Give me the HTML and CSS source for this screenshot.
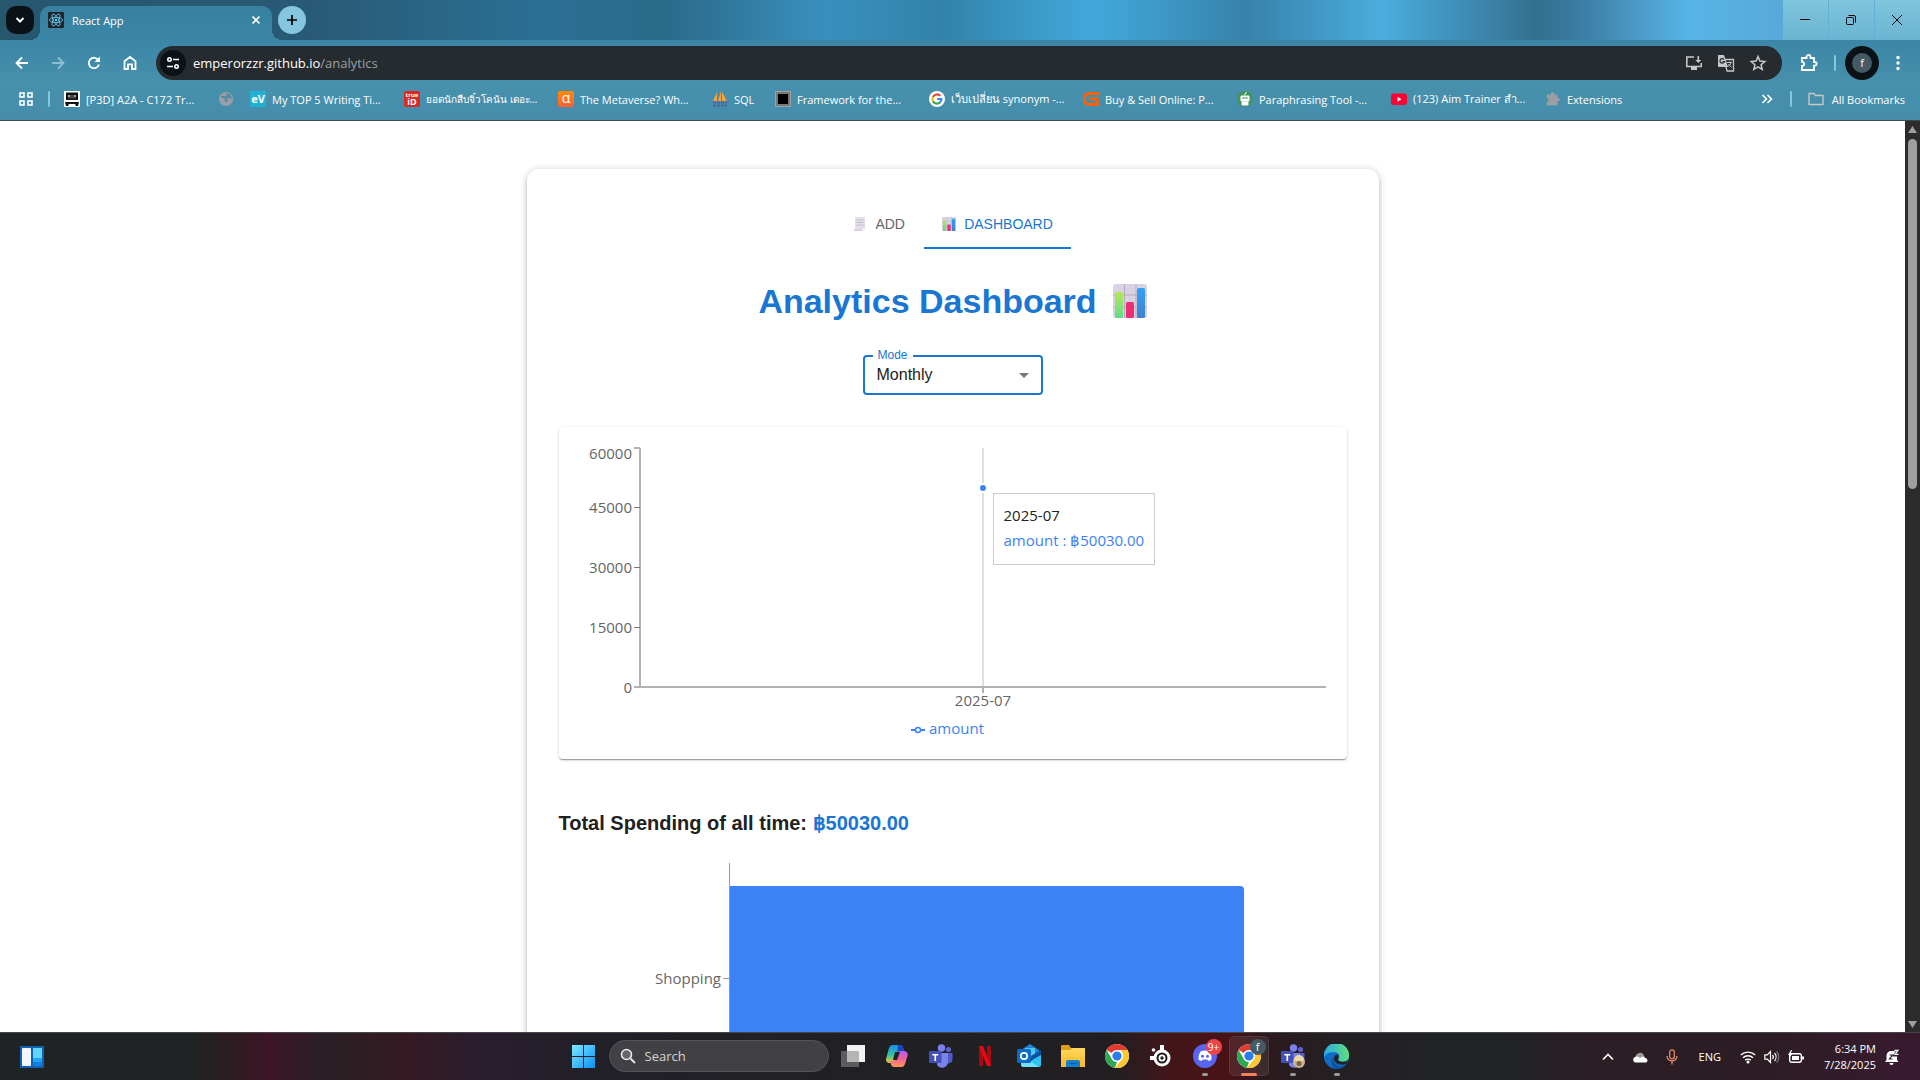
FILE: index.html
```html
<!DOCTYPE html>
<html lang="en">
<head>
<meta charset="utf-8">
<title>React App</title>
<link rel="stylesheet" href="styles.css">
</head>
<body>
<svg width="0" height="0" class="defs" aria-hidden="true">
  <defs>
    <linearGradient id="gGreen" x1="0" y1="0" x2="0" y2="1"><stop offset="0" stop-color="#b5e853"/><stop offset="1" stop-color="#5fdc8c"/></linearGradient>
    <linearGradient id="gBlue" x1="0" y1="0" x2="0" y2="1"><stop offset="0" stop-color="#32a2f3"/><stop offset="1" stop-color="#3f7fd0"/></linearGradient>
    <linearGradient id="gWin" x1="0" y1="0" x2="1" y2="1"><stop offset="0" stop-color="#7deaff"/><stop offset="1" stop-color="#0a90f5"/></linearGradient>
    <linearGradient id="gCopA" x1="0" y1="0" x2="0" y2="1"><stop offset="0" stop-color="#1c8cf0"/><stop offset=".55" stop-color="#33c4a0"/><stop offset="1" stop-color="#f5c52c"/></linearGradient>
    <linearGradient id="gCopB" x1="0" y1="0" x2="0" y2="1"><stop offset="0" stop-color="#b05cf0"/><stop offset=".5" stop-color="#f0609a"/><stop offset="1" stop-color="#ff9a50"/></linearGradient>
    <linearGradient id="gFolder" x1="0" y1="0" x2="0" y2="1"><stop offset="0" stop-color="#ffd75e"/><stop offset="1" stop-color="#f9b926"/></linearGradient>
    <linearGradient id="gEdge" x1="0" y1="0" x2="1" y2="0"><stop offset="0" stop-color="#2aa8e8"/><stop offset="1" stop-color="#5fe07a"/></linearGradient>
    <linearGradient id="gAlpha" x1="0" y1="0" x2="0" y2="1"><stop offset="0" stop-color="#ff8c00"/><stop offset="1" stop-color="#ff5c38"/></linearGradient>
    <symbol id="chart" viewBox="0 0 34 34">
      <rect width="34" height="34" rx="3" fill="#d9d2e2"/>
      <path d="M11.500 0V34M23 0V34M0 11H34M0 23H34" stroke="#b4abc2" stroke-width="1"/>
      <rect x="2" y="8" width="8" height="26" rx="1.500" fill="url(#gGreen)"/>
      <rect x="13" y="18" width="8" height="16" rx="1.500" fill="#ea2f73"/>
      <rect x="24" y="4" width="8" height="30" rx="1.500" fill="url(#gBlue)"/>
    </symbol>
    <symbol id="chrome" viewBox="0 0 24 24">
      <circle cx="12" cy="12" r="12" fill="#fff"/>
      <path d="M12 0A12 12 0 0 1 22.400 6H12A6 6 0 0 0 6.800 9L1.600 6A12 12 0 0 1 12 0Z" fill="#e33b2e"/>
      <path d="M1.600 6 6.800 15A6 6 0 0 0 12 18L9.800 23.800A12 12 0 0 1 1.600 6Z" fill="#2da94f"/>
      <path d="M22.400 6A12 12 0 0 1 9.800 23.800L17.200 15A6 6 0 0 0 17.200 9L16 6Z" fill="#fcc934"/>
      <circle cx="12" cy="12" r="5.800" fill="#fff"/><circle cx="12" cy="12" r="4.600" fill="#2b7de9"/>
    </symbol>
    <symbol id="teams" viewBox="0 0 24 24">
      <circle cx="19.500" cy="5.500" r="2.600" fill="#5b62c9"/><circle cx="12.500" cy="4" r="3.700" fill="#7b83eb"/>
      <path d="M16 9h7.500v6.500a4 4 0 0 1-6.500 3Z" fill="#5059c9"/>
      <path d="M8 9h11v8.500a6 6 0 0 1-11 3.500Z" fill="#7b83eb"/>
      <rect x="0" y="7" width="12.500" height="12" rx="1.200" fill="#454fb8"/>
      <path d="M3.300 10h6v1.500H7.100V17H5.500v-5.500H3.300Z" fill="#fff"/>
    </symbol>
    <symbol id="puzzle" viewBox="0 0 18 18">
      <path d="M2 4h4.500V3a2 2 0 0 1 4 0v1H14v4h.8a1.800 1.800 0 0 1 0 3.600H14V16H2v-4a2.100 2.100 0 0 0 0-4.200Z"/>
    </symbol>
  </defs>
</svg>

<header class="browser">
  <div class="tabstrip">
    <button class="tab-search" aria-label="Search tabs"><svg width="10" height="8" viewBox="0 0 10 8"><path d="M1.500 2 5 5.500 8.500 2" fill="none" stroke="#fff" stroke-width="2"/></svg></button>
    <div class="tab">
      <svg width="16" height="16" viewBox="0 0 16 16"><rect width="16" height="16" rx="1" fill="#20232a"/><g fill="none" stroke="#61dafb" stroke-width=".8"><ellipse cx="8" cy="8" rx="6.600" ry="2.600"/><ellipse cx="8" cy="8" rx="6.600" ry="2.600" transform="rotate(60 8 8)"/><ellipse cx="8" cy="8" rx="6.600" ry="2.600" transform="rotate(120 8 8)"/></g><circle cx="8" cy="8" r="1.200" fill="#61dafb"/></svg>
      <span class="tab-title">React App</span>
      <button class="plain" aria-label="Close tab"><svg width="16" height="16" viewBox="0 0 16 16"><path d="M4.500 4.500l7 7M11.500 4.500l-7 7" stroke="#fff" stroke-width="1.600"/></svg></button>
    </div>
    <button class="new-tab" aria-label="New tab"><svg width="12" height="12" viewBox="0 0 12 12"><path d="M6 1v10M1 6h10" stroke="#000" stroke-width="1.700"/></svg></button>
    <div class="window-controls">
      <button aria-label="Minimize"><svg width="12" height="12" viewBox="0 0 12 12"><path d="M1 5.500h10" stroke="#000"/></svg></button>
      <button aria-label="Restore"><svg width="12" height="12" viewBox="0 0 12 12"><rect x="1.500" y="3.500" width="7" height="7" rx="1" fill="none" stroke="#000"/><path d="M3.500 1.500H9a1.500 1.500 0 0 1 1.500 1.500v5.500" fill="none" stroke="#000"/></svg></button>
      <button aria-label="Close"><svg width="12" height="12" viewBox="0 0 12 12"><path d="M1 1l10 10M11 1 1 11" stroke="#000"/></svg></button>
    </div>
  </div>

  <div class="toolbar">
    <button class="nav" aria-label="Back"><svg width="16" height="16" viewBox="0 0 16 16"><path d="M14 8H3M8 2.500 2.500 8 8 13.500" fill="none" stroke="#fff" stroke-width="1.800"/></svg></button>
    <button class="nav" aria-label="Forward"><svg width="16" height="16" viewBox="0 0 16 16"><path d="M2 8h11M8 2.500 13.500 8 8 13.500" fill="none" stroke="#8dbfd3" stroke-width="1.800"/></svg></button>
    <button class="nav" aria-label="Reload"><svg width="16" height="16" viewBox="0 0 16 16"><path d="M13 9.500A5.200 5.200 0 1 1 12.300 5" fill="none" stroke="#fff" stroke-width="1.800"/><path d="M14 1.500V7H8.500Z" fill="#fff"/></svg></button>
    <button class="nav" aria-label="Home"><svg width="16" height="16" viewBox="0 0 16 16"><path d="M2.500 14V6.300L8 2l5.500 4.300V14H10V9.300H6V14Z" fill="none" stroke="#fff" stroke-width="1.800"/></svg></button>
    <div class="omnibox">
      <button class="site-info" aria-label="View site information"><svg width="14" height="14" viewBox="0 0 14 14"><g fill="none" stroke="#fff" stroke-width="1.600"><circle cx="3.500" cy="3.500" r="1.700"/><path d="M7 3.500h6M1 10.500h6"/><circle cx="10.500" cy="10.500" r="1.700"/></g></svg></button>
      <span class="url">emperorzzr.github.io<span class="path">/analytics</span></span>
      <button class="plain" aria-label="Install app"><svg width="18" height="18" viewBox="0 0 18 18"><path d="M9 3H1.800v9.500h14.400V9" fill="none" stroke="#c7c7c7" stroke-width="1.600"/><path d="M6 13h6v3H6ZM12.500 2h1.600v4h2.200l-3 3-3-3h2.200Z" fill="#c7c7c7"/></svg></button>
      <button class="plain" aria-label="Translate this page"><svg width="18" height="18" viewBox="0 0 18 18"><path d="M1 1h6l4 12H2a1 1 0 0 1-1-1Z" fill="#c7c7c7"/><path d="M8 5.500h8.500V17H10L9 13" fill="none" stroke="#c7c7c7" stroke-width="1.300"/><path d="M7 5.300a2.300 2.300 0 1 0 .5 2.200H5.500" fill="none" stroke="#252b2e" stroke-width="1.200"/><path d="M10 8.500h5M12.500 7.500v1M14 8.500c-.5 2-2 3.500-3 4M11.500 10l3 3.500" fill="none" stroke="#c7c7c7"/></svg></button>
      <button class="plain" aria-label="Bookmark this tab"><svg width="18" height="18" viewBox="0 0 18 18"><path d="M9 2.500l1.900 4.600 4.900.4-3.700 3.200 1.100 4.800L9 12.900l-4.200 2.600 1.100-4.800-3.700-3.200 4.900-.4Z" fill="none" stroke="#c7c7c7" stroke-width="1.500"/></svg></button>
    </div>
    <button class="plain extensions" aria-label="Extensions"><svg width="18" height="18" fill="none" stroke="#fff" stroke-width="1.800"><use href="#puzzle"/></svg></button>
    <span class="divider"></span>
    <button class="profile" aria-label="Profile"><span>f</span></button>
    <button class="plain" aria-label="Menu"><svg width="16" height="16" viewBox="0 0 16 16" fill="#fff"><circle cx="8" cy="2.500" r="1.700"/><circle cx="8" cy="8" r="1.700"/><circle cx="8" cy="13.500" r="1.700"/></svg></button>
  </div>

  <nav class="bookmarks">
    <button class="plain" aria-label="Apps"><svg width="14" height="14" viewBox="0 0 14 14" fill="none" stroke="#fff" stroke-width="1.600"><rect x="1" y="1" width="4" height="4"/><rect x="9" y="1" width="4" height="4"/><rect x="1" y="9" width="4" height="4"/><rect x="9" y="9" width="4" height="4"/></svg></button>
    <span class="divider"></span>
    <a class="bookmark" href="#"><svg width="16" height="16" viewBox="0 0 16 16"><rect width="16" height="16" fill="#fff"/><path d="M2 1.500h12V9H2ZM1 11h14l-1 4h-2l-1-2H5l-1 2H2Z" fill="#111"/><path d="M4 4h8v3.500H4Z" fill="#444"/><path d="M4 5h2M10 5h2" stroke="#fff"/></svg>[P3D] A2A - C172 Tr...</a>
    <a class="bookmark icon-only" href="#" aria-label="Saved page"><svg width="16" height="16" viewBox="0 0 16 16"><circle cx="8" cy="8" r="7" fill="#9b9fa5"/><path d="M3 5c2-1 3 1 5 0s-1-3 1-3c3 1 5 3 5 6-2 0-2-2-4-1s1 3-1 4-3-2-2-3-4 0-4-3Z" fill="#4f8da6"/></svg></a>
    <a class="bookmark" href="#"><svg width="16" height="16" viewBox="0 0 16 16"><rect width="16" height="16" fill="#1fb1d3"/><text x="8" y="12" text-anchor="middle" class="fav fav-ev">eV</text></svg>My TOP 5 Writing Ti...</a>
    <a class="bookmark thai" href="#"><svg width="16" height="16" viewBox="0 0 16 16"><rect width="16" height="16" rx="2" fill="#d92a26"/><text x="8" y="6" text-anchor="middle" class="fav fav-true">true</text><text x="8" y="14" text-anchor="middle" class="fav fav-id">iD</text></svg>ยอดนักสืบจิ๋วโคนัน เดอะ...</a>
    <a class="bookmark" href="#"><svg width="16" height="16" viewBox="0 0 16 16"><rect width="16" height="16" rx="2" fill="url(#gAlpha)"/><text x="8" y="12" text-anchor="middle" class="fav fav-alpha">α</text></svg>The Metaverse? Wh...</a>
    <a class="bookmark short" href="#"><svg width="16" height="16" viewBox="0 0 16 16"><path d="M5 1v9H1ZM9 0v10H6ZM10 1l5 9h-5Z" fill="#f5a33a"/><path d="M1 11.500h14M1 14.500h14" stroke="#5a5f9e" stroke-width="2" stroke-dasharray="3 1"/></svg>SQL</a>
    <a class="bookmark" href="#"><svg width="16" height="16" viewBox="0 0 16 16"><rect width="16" height="16" fill="#777"/><rect x=".5" y=".5" width="15" height="15" fill="none" stroke="#ccc" stroke-dasharray="1 1"/><rect x="3" y="3" width="10" height="10" fill="#000"/></svg>Framework for the...</a>
    <a class="bookmark" href="#"><svg width="16" height="16" viewBox="0 0 16 16"><circle cx="8" cy="8" r="8" fill="#fff"/><g fill="none" stroke-width="2.200"><path d="M11.300 4.800A4.500 4.500 0 0 0 4 6" stroke="#ea4335"/><path d="M4 6a4.500 4.500 0 0 0 0 4.200" stroke="#fbbc05"/><path d="M4 10.200a4.500 4.500 0 0 0 7 1.200" stroke="#34a853"/><path d="M11 11.400A4.500 4.500 0 0 0 12.400 8H8" stroke="#4285f4"/></g></svg>เว็บเปลี่ยน synonym -...</a>
    <a class="bookmark" href="#"><svg width="16" height="16" viewBox="0 0 16 16"><path d="M16 2.500H6.500a5.500 5.500 0 0 0 0 11H14V8H7" fill="none" stroke="#ff6000" stroke-width="3.200"/></svg>Buy &amp; Sell Online: P...</a>
    <a class="bookmark" href="#"><svg width="16" height="16" viewBox="0 0 16 16"><circle cx="8" cy="8" r="7.800" fill="#43935a"/><path d="M4 5h8v5H4ZM5 11h6v3H5ZM7.500 4l2-3" fill="#fff" stroke="#fff"/><path d="M5.500 7h2M8.500 7h2" stroke="#43935a" stroke-width="1.500"/></svg>Paraphrasing Tool -...</a>
    <a class="bookmark" href="#"><svg width="16" height="16" viewBox="0 0 16 16"><rect y="2.500" width="16" height="11.500" rx="3" fill="#ff0033"/><path d="M6.500 5.800v5L10.500 8.300Z" fill="#fff"/></svg>(123) Aim Trainer สำ...</a>
    <a class="bookmark" href="#"><svg width="16" height="16" fill="#9b9fa5"><use href="#puzzle"/></svg>Extensions</a>
    <button class="plain more" aria-label="More bookmarks"><svg width="12" height="10" viewBox="0 0 12 10"><path d="M1.500 1l4 4-4 4M6.500 1l4 4-4 4" fill="none" stroke="#fff" stroke-width="1.600"/></svg></button>
    <span class="divider"></span>
    <a class="all" href="#"><svg width="16" height="14" viewBox="0 0 16 14"><path d="M1 12.500V1.500h5l1.500 2H15v9Z" fill="none" stroke="#c7c7c7" stroke-width="1.400"/></svg>All Bookmarks</a>
  </nav>
</header>

<div class="viewport">
  <div class="page">
    <main class="card">
      <div class="tabs" role="tablist">
        <button class="mui-tab" role="tab" aria-selected="false"><svg class="dim" width="14" height="14" viewBox="0 0 14 14"><path d="M2 0h10v12H10v2H2a1.500 1.500 0 0 1-1.500-1.500H2Z" fill="#d9d2e2"/><path d="M3.500 3h7M3.500 5.500h7M3.500 8h7" stroke="#a9a2b4"/><path d="M.5 12.500h8V14H2Z" fill="#c6b2dc"/></svg>ADD</button>
        <button class="mui-tab selected" role="tab" aria-selected="true"><svg width="14" height="14"><use href="#chart"/></svg>DASHBOARD</button>
      </div>
      <h1>Analytics Dashboard <svg width="34" height="34" role="img" aria-label="bar chart"><use href="#chart"/></svg></h1>
      <div class="field">
        <label for="mode">Mode</label>
        <select id="mode"><option>Monthly</option><option>Daily</option><option>Yearly</option></select>
        <svg class="caret" width="10" height="5" viewBox="0 0 10 5"><path d="M0 0h10L5 5Z" fill="#757575"/></svg>
      </div>

      <section class="paper">
        <svg class="plot" viewBox="0 0 756 300">
          <g stroke="#666" stroke-opacity=".5" stroke-width="2">
            <path d="M65 5V245M64 244H751M59 5h6M59 244h6M408 244v6"/>
          </g>
          <path d="M59 64.500h6M59 124.500h6M59 184.500h6" stroke="#777"/>
          <g class="axis" text-anchor="end">
            <text x="57" y="16">60000</text><text x="57" y="70">45000</text><text x="57" y="130">30000</text><text x="57" y="190">15000</text><text x="57" y="250">0</text>
          </g>
          <text class="axis" x="408" y="263" text-anchor="middle">2025-07</text>
          <path d="M408 5V243" stroke="#e0e0e0" stroke-width="2"/>
          <circle cx="408" cy="45" r="4" fill="#3b82f6" stroke="#fff" stroke-width="2"/>
          <path d="M336 287h4.500M345.500 287h4.500" stroke="#3b82f6" stroke-width="2"/>
          <circle cx="343" cy="287" r="2.500" fill="none" stroke="#3b82f6" stroke-width="1.500"/>
          <text class="legend" x="354" y="291">amount</text>
        </svg>
        <div class="tooltip"><p>2025-07</p><p class="value">amount : ฿50030.00</p></div>
      </section>

      <h2>Total Spending of all time: <span>฿50030.00</span></h2>
      <svg class="plot" viewBox="0 0 788 270">
        <path d="M170.500 8V238M164 123.500h6" stroke="#999"/>
        <path d="M171 31H681a4 4 0 0 1 4 4V211a4 4 0 0 1-4 4H171Z" fill="#3b82f6"/>
        <text class="axis" x="162" y="129" text-anchor="end">Shopping</text>
      </svg>
    </main>
  </div>
  <div class="scrollbar">
    <svg width="9" height="7" viewBox="0 0 9 7"><path d="M4.500 0 9 7H0Z" fill="#9f9f9f"/></svg>
    <div class="track"><div class="thumb"></div></div>
    <svg width="9" height="7" viewBox="0 0 9 7"><path d="M4.500 7 9 0H0Z" fill="#9f9f9f"/></svg>
  </div>
</div>

<footer class="taskbar">
  <button class="widgets" aria-label="Widgets"><svg width="24" height="22" viewBox="0 0 24 22"><rect width="24" height="22" rx="1" fill="#0f62b4"/><rect x="2" y="2" width="9" height="18" rx="1" fill="#f4f7fa"/><rect x="13" y="2" width="9" height="10" fill="#62d4fb"/><rect x="13" y="12" width="9" height="4" fill="#22a4f4"/><rect x="13" y="16" width="9" height="4" fill="#0c80e4"/></svg></button>
  <div class="apps">
    <button aria-label="Start"><svg width="23" height="23" viewBox="0 0 23 23" fill="url(#gWin)"><path d="M0 0h11v11H0ZM12 0h11v11H12ZM0 12h11v11H0ZM12 12h11v11H12Z"/></svg></button>
    <div class="search">
      <svg width="16" height="16" viewBox="0 0 16 16"><circle cx="6.500" cy="6.500" r="5" fill="#666" stroke="#e8e8e8" stroke-width="1.600"/><path d="M10.500 10.500 15 15" stroke="#e8e8e8" stroke-width="1.800"/></svg>
      <input type="text" placeholder="Search" aria-label="Search">
    </div>
    <button aria-label="Task view"><svg width="24" height="24" viewBox="0 0 24 24"><rect x="6" y="1" width="18" height="17" fill="#f2f2f2"/><rect x="0" y="7" width="18" height="16" fill="#5c5c5c"/><rect x="6" y="7" width="12" height="11" fill="#b5b5b5"/></svg></button>
    <button aria-label="Copilot"><svg width="24" height="24" viewBox="0 0 24 24"><path d="M7 1h8a3 3 0 0 1 2.800 2L19 7h-4l-4 12H4.500A3.500 3.500 0 0 1 1.300 14L4 4A4 4 0 0 1 7 1Z" fill="url(#gCopA)"/><path d="M13 1h2a3 3 0 0 1 2.800 2L19 7h-4a4 4 0 0 0-3 2Z" fill="#1745c2"/><path d="M17 23H9a3 3 0 0 1-2.800-2L5 17h4l4-10h6.500A3.500 3.500 0 0 1 22.700 11L20 20A4 4 0 0 1 17 23Z" fill="url(#gCopB)"/><path d="M10 8h5l-3 8H8Z" fill="#222126"/></svg></button>
    <button aria-label="Teams"><svg width="24" height="24"><use href="#teams"/></svg></button>
    <button aria-label="Netflix"><svg width="12" height="20" viewBox="0 0 12 20"><path d="M0 0h4v20H0ZM8 0h4v20H8Z" fill="#a90910"/><path d="M0 0h4l8 20H8Z" fill="#e50914"/></svg></button>
    <button aria-label="Outlook"><svg width="24" height="24" viewBox="0 0 24 24"><path d="M4 6 13 0l9 6v8H4Z" fill="#1b86dc"/><path d="M8 4h10v9H8Z" fill="#50c8f5"/><path d="M24 7v14a2 2 0 0 1-2 2H8Z" fill="#2cc3ef"/><path d="M4 11l18 12H6a2 2 0 0 1-2-2Z" fill="#6fe0fa"/><path d="M14 12l10-6v5l-9 5Z" fill="#0b4fa5"/><rect y="5" width="14" height="14" rx="1.500" fill="#0a6cc8"/><circle cx="7" cy="12" r="3.200" fill="none" stroke="#fff" stroke-width="1.700"/></svg></button>
    <button aria-label="File Explorer"><svg width="24" height="24" viewBox="0 0 24 24"><path d="M0 2a1 1 0 0 1 1-1h7l2 3h13a1 1 0 0 1 1 1v6H0Z" fill="#dc9e16"/><path d="M0 6h9l2-2h13v19H0Z" fill="url(#gFolder)"/><path d="M5 23v-5a2 2 0 0 1 2-2h10a2 2 0 0 1 2 2v5Z" fill="#1283d2"/><path d="M8 19.500h8" stroke="#0b5da3" stroke-width="1.500"/></svg></button>
    <button aria-label="Chrome"><svg width="24" height="24"><use href="#chrome"/></svg></button>
    <button aria-label="SteelSeries GG"><svg width="22" height="22" viewBox="0 0 22 22"><circle cx="12" cy="13" r="8.500" fill="#fff"/><circle cx="12" cy="13" r="4.500" fill="#fff" stroke="#1d1b20" stroke-width="2"/><circle cx="12" cy="13" r="1.700" fill="#1d1b20"/><path d="M0 11h5v4H0ZM10 0h4v5h-4Z" fill="#fff"/><circle cx="3.500" cy="5" r="1.800" fill="#fff"/></svg></button>
    <button class="open" aria-label="Discord"><svg width="24" height="24" viewBox="0 0 24 24"><circle cx="12" cy="12" r="12" fill="#5865f2"/><path d="M7.500 7.500c3-1.200 6-1.200 9 0 1.500 2.500 2.200 5 2 8-1.200 1-2.300 1.400-3.300 1.500l-.9-1.500h-4.600L8.800 17c-1-.1-2.100-.5-3.300-1.500-.2-3 .5-5.500 2-8Z" fill="#fff"/><circle cx="9.500" cy="12.300" r="1.500" fill="#5865f2"/><circle cx="14.500" cy="12.300" r="1.500" fill="#5865f2"/></svg><span class="badge count">9+</span></button>
    <button class="open active" aria-label="Chrome, React App"><svg width="24" height="24"><use href="#chrome"/></svg><span class="badge">f</span></button>
    <button class="open" aria-label="Teams chat"><svg width="24" height="24" viewBox="0 0 24 24"><use href="#teams"/><circle cx="18" cy="18" r="6" fill="#c9b58e"/><path d="M13 16a5 5 0 0 1 10 0l-2 1h-6Z" fill="#ecd9a4"/><circle cx="18" cy="19.500" r="2.500" fill="#7a6048"/></svg></button>
    <button class="open" aria-label="Edge"><svg width="25" height="25" viewBox="0 0 24 24"><circle cx="12" cy="12" r="12" fill="#0f6cc4"/><path d="M0 11A12 12 0 0 1 24 11c.3 4-3 6-6 6-3.500 0-5-1.500-4-3 1.200-2 .5-6-4-6C5 8 1 9 0 14Z" fill="url(#gEdge)"/><path d="M9 12c-1.500 4 1.500 9.500 7 9.500 2 0 3.500-.5 5.500-2.500A12 12 0 0 1 12 24C7 23 6 15 9 12Z" fill="#0b4f9c"/><path d="M13.500 10c1 1.500.8 3 0 4.500-.6 1.500 1 2.500 4.500 2.500 2 0 3.500-.6 5-2l-1.500 4c-5 2.500-11.500 0-12-4.500C9.300 12 11 10 13.500 10Z" fill="#242126"/></svg></button>
  </div>
  <div class="tray">
    <button class="plain" aria-label="Show hidden icons"><svg width="12" height="8" viewBox="0 0 12 8"><path d="M1 6.500 6 1.500l5 5" fill="none" stroke="#fff" stroke-width="1.600"/></svg></button>
    <svg class="cloud" width="16" height="12" viewBox="0 0 16 12"><path d="M4 7a4 4 0 0 1 8-2l2 3-5 2Z" fill="#9a9a9a"/><path d="M3 11.500a3 3 0 0 1 0-5.500c2-1 4 0 5 1 2-2 4-1.500 5 0 3 0 3.500 4.500 0 4.500Z" fill="#fff"/></svg>
    <svg width="12" height="16" viewBox="0 0 12 16"><rect x="3.700" y=".8" width="4.600" height="9" rx="2.300" fill="none" stroke="#e08a6c" stroke-width="1.300"/><path d="M1 7a5 5 0 0 0 10 0M6 12v3.500" fill="none" stroke="#e08a6c" stroke-width="1.300"/></svg>
    <span class="lang">ENG</span>
    <div class="status">
      <svg width="16" height="14" viewBox="0 0 16 14"><g fill="none" stroke="#fff" stroke-width="1.400"><path d="M.8 5a10.500 10.500 0 0 1 14.400 0M3 7.800a7.200 7.200 0 0 1 10 0M5.200 10.300a4 4 0 0 1 5.600 0"/></g><circle cx="8" cy="12" r="1.500" fill="#fff"/></svg>
      <svg width="16" height="14" viewBox="0 0 16 14"><g fill="none" stroke="#fff" stroke-width="1.200"><path d="M.8 4.800h2.500L6.500 1.500v11L3.300 9.200H.8Z"/><path d="M8.500 5a3 3 0 0 1 0 4M10.500 3a6 6 0 0 1 0 8"/><path d="M12.600 1.500a8 8 0 0 1 0 11" stroke="#777"/></g></svg>
      <svg width="16" height="14" viewBox="0 0 16 14"><rect x="1.700" y="3.700" width="11.600" height="8.600" rx="2" fill="none" stroke="#fff" stroke-width="1.400"/><path d="M4 6h7v4H4ZM14 6.500h2v3h-2ZM3 0 0 5h2L1 8l4-5H3l1-3Z" fill="#fff"/></svg>
    </div>
    <time class="clock"><span>6:34 PM</span><span>7/28/2025</span></time>
    <svg width="16" height="16" viewBox="0 0 16 16"><path d="M2.500 11V6.500a4.500 4.500 0 0 1 5-4.500H13v9l1.500 2H1Z" fill="#fff"/><path d="M5.500 14h4a2 2 0 0 1-4 0Z" fill="#fff"/><path d="M5.500 6h3l-3 4h3" fill="none" stroke="#321c2c" stroke-width="1.200"/><path d="M10.500.8h4L11 6h4" fill="none" stroke="#321c2c" stroke-width="3"/><path d="M10.500 1.300h3.500l-3 4h3.500" fill="none" stroke="#fff" stroke-width="1.200"/></svg>
  </div>
</footer>
</body>
</html>
```
FILE: styles.css
```css
* { box-sizing: border-box; }

body {
  margin: 0;
  height: 100vh;
  display: flex;
  flex-direction: column;
  overflow: hidden;
  background: #fff;
  font-family: "Open Sans", "Noto Sans", "Noto Sans CJK SC", sans-serif;
  color: #212121;
}

.defs { position: absolute; }
svg { display: block; flex: none; }
button { font: inherit; color: inherit; border: 0; padding: 0; background: none; display: flex; align-items: center; justify-content: center; flex: none; }
a { color: inherit; text-decoration: none; }

/* Browser window frame */
.browser {
  flex: none;
  color: #fff;
  font-size: 11px;
  background: linear-gradient(#37809f, #3b86a6 40px, #4791ad 85px, #458dab);
  border-bottom: 1px solid #3d4a50;
}

.tabstrip {
  display: flex;
  align-items: flex-end;
  height: 40px;
  padding-left: 6px;
  background: linear-gradient(90deg, #27566f 0%, #295a75 16%, #2b6f94 28%, #2b6b8b 35%, #3990bd 43%, #3283a9 49%, #42a8dc 57%, #3782aa 65%, #4badde 72%, #347090 80%, #3a7a9f 82%, #58b4e8 88%, #58a8d8 93%);
}

.tab-search { width: 28px; height: 28px; margin: 0 6px 6px 0; border-radius: 10px; background: #0a1217; }

.tab {
  position: relative;
  display: flex;
  align-items: center;
  gap: 8px;
  width: 232px;
  height: 34px;
  padding: 0 8px 6px;
  border-radius: 10px 10px 0 0;
  background: linear-gradient(#37809f, #3b86a6);
}
.tab::before, .tab::after { content: ""; position: absolute; bottom: 0; width: 10px; height: 10px; }
.tab::before { left: -10px; background: radial-gradient(circle at 0 0, transparent 10px, #3b86a6 10px); }
.tab::after { right: -10px; background: radial-gradient(circle at 100% 0, transparent 10px, #3b86a6 10px); }
.tab-title { flex: 1; }

.new-tab { width: 28px; height: 28px; margin: 0 0 6px 6px; border-radius: 50%; background: #86c5de; }

.window-controls { display: flex; gap: 1px; height: 40px; margin-left: auto; background: #62b0d8; }
.window-controls button { width: 45px; padding: 0 2px 1px 0; background: linear-gradient(#7fc5dd, #6ab5d2); }

.toolbar { display: flex; align-items: center; height: 46px; padding: 0 14px 0 4px; }
.nav { width: 36px; height: 34px; }

.omnibox {
  flex: 1;
  display: flex;
  align-items: center;
  gap: 14px;
  height: 34px;
  margin-left: 8px;
  padding: 0 15px 0 4px;
  border-radius: 17px;
  background: #252b2e;
}
.site-info { width: 26px; height: 26px; border-radius: 50%; background: #0a1217; }
.url { flex: 1; margin-left: -7px; font-size: 13px; }
.url .path { color: #9aa0a3; }

.extensions { margin: 0 16px 0 18px; }
.divider { flex: none; width: 2px; height: 16px; border-radius: 1px; background: #86c5de; }
.profile { width: 34px; height: 34px; margin: 0 11px 0 9px; border-radius: 50%; background: #0a1217; }
.profile span { width: 20px; height: 20px; border-radius: 50%; background: #455a64; line-height: 20px; }

.bookmarks { display: flex; align-items: center; height: 34px; padding: 0 15px 8px 19px; }
.bookmarks > .divider:nth-of-type(1) { margin: 0 6px 0 15px; }
.bookmark { flex: none; display: flex; align-items: center; gap: 6px; width: 154px; padding: 0 8px; white-space: nowrap; }
.bookmark.icon-only { width: 32px; }
.bookmark.short { width: 63px; }
.bookmark.thai { font-size: 10px; }
.bookmarks .more { margin: 0 17px 0 auto; }
.all { display: flex; align-items: center; gap: 8px; margin-left: 16px; white-space: nowrap; }

.fav { fill: #fff; font-weight: 700; }
.fav-ev { font-size: 11px; }
.fav-true { font-size: 6px; }
.fav-id { font-size: 9px; }
.fav-alpha { font-size: 14px; font-weight: 400; }

/* Web page */
.viewport { flex: 1; min-height: 0; display: flex; }
.page { flex: 1; overflow: hidden; padding: 48px 24px; font-family: "Liberation Sans", Arial, sans-serif; }

.card {
  max-width: 852px;
  margin: 0 auto;
  padding: 32px;
  border-radius: 12px;
  background: #fff;
  box-shadow: 0 3px 3px -2px rgba(0, 0, 0, .2), 0 3px 4px rgba(0, 0, 0, .14), 0 1px 8px rgba(0, 0, 0, .2);
}

.tabs { display: flex; justify-content: center; height: 48px; }
.mui-tab { gap: 8px; min-width: 90px; padding: 0 18px; border-bottom: 2px solid transparent; font-size: 14px; color: #666; }
.mui-tab.selected { color: #1976d2; border-color: #1976d2; }
.dim { opacity: .7; }

h1 {
  display: flex;
  align-items: center;
  justify-content: center;
  gap: 16px;
  margin: 32px 0 34px;
  font-size: 34px;
  line-height: 40px;
  color: #1976d2;
}

.field { position: relative; width: 180px; height: 40px; margin: 0 auto 32px; }
.field label { position: absolute; top: -7px; left: 10px; padding: 0 5px; background: #fff; font-size: 12px; line-height: 14px; color: #1976d2; }
.field select {
  appearance: none;
  width: 100%;
  height: 100%;
  padding: 0 32px 2px 12px;
  border: 2px solid #1976d2;
  border-radius: 4px;
  background: #fff;
  font: 16px "Liberation Sans", Arial, sans-serif;
  color: #212121;
}
.caret { position: absolute; right: 14px; top: 18px; pointer-events: none; }

.paper {
  position: relative;
  padding: 16px;
  border-radius: 4px;
  background: #fff;
  box-shadow: 0 2px 1px -1px rgba(0, 0, 0, .2), 0 1px 1px rgba(0, 0, 0, .14), 0 1px 3px rgba(0, 0, 0, .2);
}
.plot { width: 100%; height: auto; font: 15px "Open Sans", "Noto Sans", sans-serif; }
.axis { fill: #666; }
.legend { fill: #3b82f6; }

.tooltip {
  position: absolute;
  left: 434px;
  top: 66px;
  padding: 9px 10px 11px;
  border: 1px solid #ccc;
  background: #fff;
  font: 15px/25px "Open Sans", "Noto Sans", sans-serif;
  white-space: nowrap;
}
.tooltip p { margin: 0; }
.tooltip .value { color: #3b82f6; }

h2 { margin: 48px 0 16px; font-size: 20px; line-height: 32px; }
h2 span { color: #1976d2; }

.scrollbar { flex: none; display: flex; flex-direction: column; align-items: center; width: 15px; padding: 5px 0 4px; background: #2c2c2c; }
.track { flex: 1; width: 9px; padding: 6px 0; }
.thumb { height: 40%; border-radius: 5px; background: #9f9f9f; }

/* Windows taskbar */
.taskbar {
  flex: none;
  display: grid;
  grid-template-columns: 1fr auto 1fr;
  align-items: center;
  height: 48px;
  border-top: 1px solid #48484a;
  color: #fff;
  font-size: 11px;
  background: linear-gradient(90deg, #202324 0%, #202324 10%, #2c1c22 12%, #3d1626 14%, #2a2026 17%, #351a22 21%, #2a1e2e 25%, #221f28 30%, #202124 45%, #211e21 58%, #43161a 61%, #481316 64%, #2b1a1d 66%, #232124 70%, #242124 72%, #202426 75%, #202426 78%, #2b1e24 83%, #2c1d24 92%, #381a2f 99%);
}
.widgets { width: 24px; height: 46px; margin-left: 20px; }

.apps { display: flex; align-items: center; padding-bottom: 1px; }
.apps button { position: relative; width: 44px; height: 46px; }
.search {
  display: flex;
  align-items: center;
  gap: 9px;
  width: 220px;
  height: 32px;
  margin: 0 2px 0 3px;
  padding: 0 10px;
  border-radius: 16px;
  border: 1px solid #555558;
  background: #414145;
}
.search input { width: 100%; padding: 0; border: 0; outline: 0; background: none; font: inherit; font-size: 13px; color: #fff; }
.search input::placeholder { color: #d4d4d4; }

.apps .open::after { content: ""; position: absolute; left: 19px; bottom: 3px; width: 6px; height: 3px; border-radius: 2px; background: #9a9a9a; }
.apps .active::before { content: ""; position: absolute; inset: 3px 2px; border-radius: 5px; border: 1px solid rgba(255, 255, 255, .08); background: rgba(255, 255, 255, .08); }
.apps .active::after { left: 14px; width: 16px; background: #f5805f; }
.active svg { position: relative; }
.badge { position: absolute; top: 6px; right: 5px; width: 16px; height: 16px; border-radius: 50%; background: #455a64; line-height: 16px; }
.badge.count { background: #ec4549; font-size: 10px; }

.tray { display: flex; align-items: center; justify-content: flex-end; padding-right: 20px; }
.tray .cloud { margin: 0 18px; }
.lang { margin: 0 19px 0 21px; }
.status { display: flex; gap: 8px; }
.clock { display: flex; flex-direction: column; width: 56px; margin: 0 8px 0 16px; text-align: right; line-height: 16px; }
```
